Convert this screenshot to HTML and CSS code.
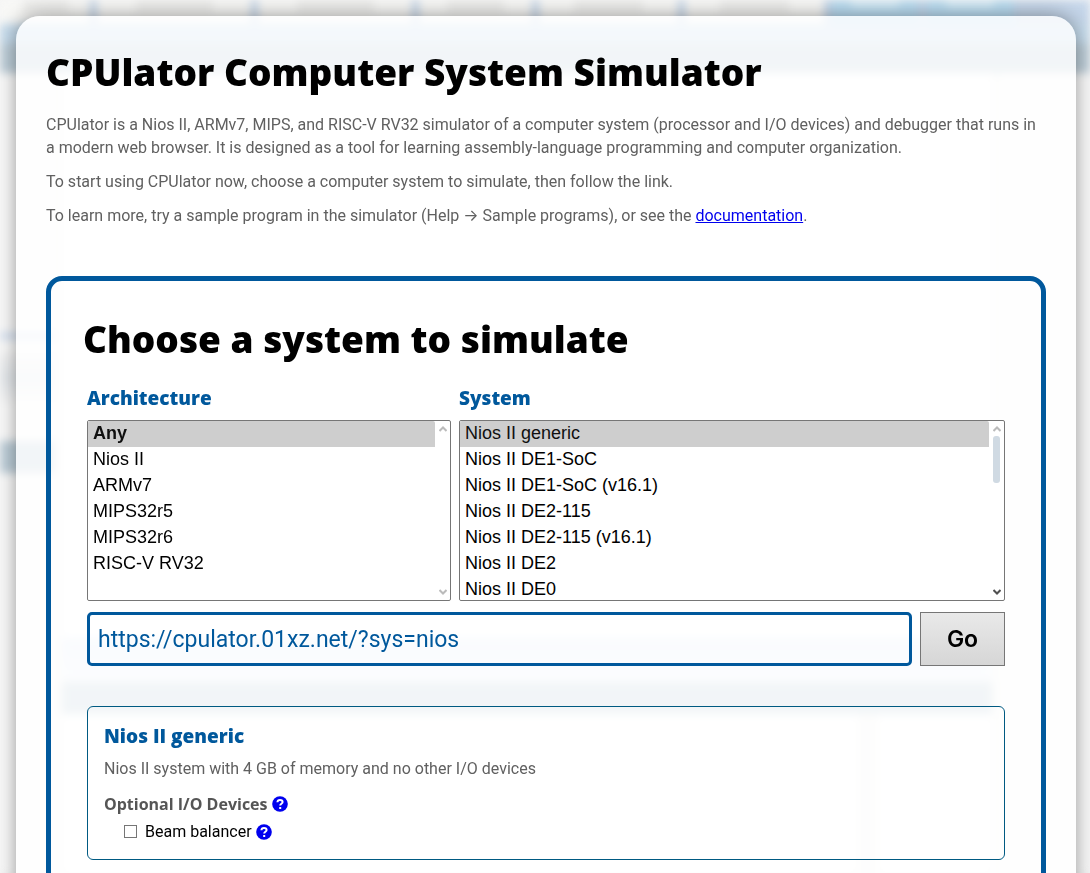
FILE: index.html
```html
<!DOCTYPE html>
<html lang="en">
<head>
<meta charset="utf-8">
<meta name="viewport" content="width=device-width, initial-scale=1">
<title>CPUlator Computer System Simulator</title>
<link rel="stylesheet" href="styles.css">
</head>
<body>
<div class="backdrop" aria-hidden="true">
  <div class="bd-tabs">
    <i class="bd-tab t1"></i><i class="bd-tab t2"></i><i class="bd-tab t2"></i><i class="bd-tab t3"></i><i class="bd-tab t4"></i><i class="bd-tab t4"></i><i class="bd-menu"></i><i class="bd-menu"></i>
  </div>
  <div class="bd-strip"></div>
  <div class="bd-head"></div>
  <div class="bd-main">
    <div class="bd-side"><i class="bd-line"></i><i class="bd-shade"></i><i class="bd-bar"></i></div>
    <div class="bd-center"><i class="bd-tint"></i><i class="bd-bar"></i><i class="bd-split"></i></div>
    <div class="bd-right"></div>
  </div>
</div>
<main class="sheet">
  <h1 class="title">CPUlator Computer System Simulator</h1>
  <p class="text">CPUlator is a Nios II, ARMv7, MIPS, and RISC-V RV32 simulator of a computer system (processor and I/O devices) and debugger that runs in a modern web browser. It is designed as a tool for learning assembly-language programming and computer organization.</p>
  <p class="text">To start using CPUlator now, choose a computer system to simulate, then follow the link.</p>
  <p class="text">To learn more, try a sample program in the simulator (Help <span class="to">→</span> Sample programs), or see the <a href="#doc">documentation</a>.</p>

  <section class="chooser">
    <h2 class="title">Choose a system to simulate</h2>
    <form class="form">
      <div class="lists">
        <div class="field">
          <label class="heading" for="arch">Architecture</label>
          <div class="listbox">
            <select id="arch" size="7">
              <option class="any" selected>Any</option>
              <option>Nios II</option>
              <option>ARMv7</option>
              <option>MIPS32r5</option>
              <option>MIPS32r6</option>
              <option>RISC-V RV32</option>
            </select>
            <div class="scroll" aria-hidden="true">
              <svg class="arrow" viewBox="0 0 8 6"><path d="M0.500 5l3.500-3.500L7.500 5"/></svg>
              <svg class="arrow" viewBox="0 0 8 6"><path d="M0.500 1l3.500 3.500L7.500 1"/></svg>
            </div>
          </div>
        </div>
        <div class="field">
          <label class="heading" for="system">System</label>
          <div class="listbox">
            <select id="system" size="7">
              <option selected>Nios II generic</option>
              <option>Nios II DE1-SoC</option>
              <option>Nios II DE1-SoC (v16.1)</option>
              <option>Nios II DE2-115</option>
              <option>Nios II DE2-115 (v16.1)</option>
              <option>Nios II DE2</option>
              <option>Nios II DE0</option>
            </select>
            <div class="scroll" aria-hidden="true">
              <svg class="arrow" viewBox="0 0 8 6"><path d="M0.500 5l3.500-3.500L7.500 5"/></svg>
              <span class="thumb"></span>
              <svg class="arrow active" viewBox="0 0 8 6"><path d="M0.500 1l3.500 3.500L7.500 1"/></svg>
            </div>
          </div>
        </div>
      </div>
      <div class="go-row">
        <input class="url" type="text" aria-label="Simulator link" value="https://cpulator.01xz.net/?sys=nios">
        <button class="go" type="button">Go</button>
      </div>
      <div class="info">
        <h3 class="heading">Nios II generic</h3>
        <p class="text">Nios II system with 4 GB of memory and no other I/O devices</p>
        <h4 class="optional">Optional I/O Devices
          <svg class="help" viewBox="0 0 16 16"><circle cx="8" cy="8" r="7.8"/><path d="M5.400 6.300C5.500 4.600 6.600 3.900 8 3.900c1.500 0 2.600.8 2.600 2.100 0 1.700-2.400 1.800-2.400 3.500"/><path d="M8.200 11v2"/></svg>
        </h4>
        <div class="device">
          <input id="beam" type="checkbox"><label for="beam">Beam balancer</label>
          <svg class="help" viewBox="0 0 16 16"><circle cx="8" cy="8" r="7.8"/><path d="M5.400 6.300C5.500 4.600 6.600 3.900 8 3.900c1.500 0 2.600.8 2.600 2.100 0 1.700-2.400 1.800-2.400 3.500"/><path d="M8.200 11v2"/></svg>
        </div>
      </div>
    </form>
  </section>
</main>
</body>
</html>
```

FILE: styles.css
```css
* { box-sizing: border-box; }
body { margin: 0; padding: 16px 14px 0 16px; background: #f6f6f6; font: 16px/23px Roboto, sans-serif; color: #000; }

.backdrop { position: fixed; inset: 0; z-index: -1; display: flex; flex-direction: column; overflow: hidden; filter: blur(4px); background: #f7f7f7; }
.bd-tabs { display: flex; gap: 7px; height: 24px; background: #c5d6ea; }
.bd-tab { padding: 0 30%; background: #f8f8f6; }
.bd-tab, .bd-menu { flex: none; padding: 0; display: flex; justify-content: center; }
.bd-tab::before { content: ""; width: 50%; height: 14px; background: #ededeb; }
.bd-menu::before { content: ""; width: 55%; height: 8px; background: #d3eaf6; }
.bd-tab.t1 { width: 90px; }
.bd-tab.t2 { width: 154px; }
.bd-tab.t3 { width: 113px; }
.bd-tab.t4 { width: 139px; }
.bd-menu { width: 88px; background: #b9dcf1; }
.bd-strip { height: 20px; background: #c6dced; }
.bd-head { height: 29px; background: #bdced9; }
.bd-main { flex: 1; display: flex; gap: 8px; background: #f5f5f3; }
.bd-side { width: 54px; background: #fbfbfb; display: flex; flex-direction: column; }
.bd-line { margin-top: 260px; height: 6px; background: #cddcf0; }
.bd-shade { margin: 14px 0; height: 50px; background: linear-gradient(#f4f4f4, #e4e8ec, #f7f7f7); }
.bd-side .bd-bar { margin-top: 24px; }
.bd-bar { height: 32px; flex: none; background: #bdced9; }
.bd-center { flex: 1; background: #fff; display: flex; flex-direction: column; }
.bd-tint { margin-top: 565px; height: 44px; background: linear-gradient(#e0eaf8, #f0f4fa); }
.bd-split { flex: 1; width: 20px; margin-left: 796px; background: #f4f4f2; }
.bd-right { width: 90px; background: #fafafa; }

.sheet { padding: 30px; border-radius: 24px 24px 0 0; background: rgba(255, 255, 255, .8); box-shadow: 0 0 20px rgba(0, 0, 0, .4); }
.title { margin: 0; font: 800 37px/52px "Open Sans", sans-serif; }
.text { margin: 0 0 11px; color: #606060; }
h1.title { margin-bottom: 15px; }
.text a { color: #00e; }
.to { font-family: Inter, sans-serif; }

.chooser { margin-top: 49px; padding: 32px; border: 5px solid #00589c; border-radius: 16px; }
.form { padding: 0 4px; }
.heading { display: block; margin: 0; color: #00589c; font: 800 19px/26px "Open Sans", sans-serif; }
h2.title { margin-bottom: 20px; }
.lists { display: grid; grid-template-columns: 2fr 3fr; gap: 8px; }
.field { min-width: 0; }
.field .heading { margin-bottom: 9px; }
.listbox { display: flex; height: 181px; border: 1px solid #767676; border-radius: 2px; background: #fff; overflow: hidden; }
.listbox select { flex: 1; min-width: 0; height: 100%; padding: 0; border: 0; outline: 0; background: #fff; color: #000; font: 18px "Liberation Sans", Arial, sans-serif; scrollbar-width: none; }
.listbox option { padding: 2px 5px 3px; }
.listbox option:checked { background: #cecece; color: #101010; }
.listbox .any { font-weight: bold; }
.scroll { width: 15px; padding: 5px 3px; display: flex; flex-direction: column; gap: 4px; align-items: center; }
.arrow { width: 8px; height: 6px; fill: none; stroke: #bbb; stroke-width: 2; }
.arrow:last-child { margin-top: auto; }
.arrow.active { stroke: #505050; }
.thumb { width: 7px; height: 47px; border-radius: 3px; background: #d0dae3; }

.go-row { display: flex; gap: 8px; margin-top: 11px; }
.url { flex: 1; min-width: 0; height: 54px; padding: 0 8px; border: 3px solid #00589c; border-radius: 5px; background: transparent; color: #00589c; font: 23px Roboto, sans-serif; }
.go { width: 85px; border: 1px solid #767676; background: linear-gradient(#e9e9e9, #d6d6d6); color: #000; font: 600 23px Inter, sans-serif; }

.info { margin-top: 40px; padding: 16px; border: 1px solid #005a82; border-radius: 6px; }
.info .text { margin: 8px 0 12px; }
.optional { display: flex; align-items: center; gap: 4px; margin: 0; color: #555; font: 700 16px/24px "Open Sans", sans-serif; }
.help { width: 16px; height: 16px; fill: #00e; }
.help path { fill: none; stroke: #fff; stroke-width: 2; }
.device { display: flex; align-items: center; gap: 4px; margin: 4px 0 0 20px; }
.device input { appearance: none; width: 13px; height: 13px; margin: 0 4px 0 0; border: 1px solid #767676; background: #fff; }
.device input:checked { background: #00589c; }
```
